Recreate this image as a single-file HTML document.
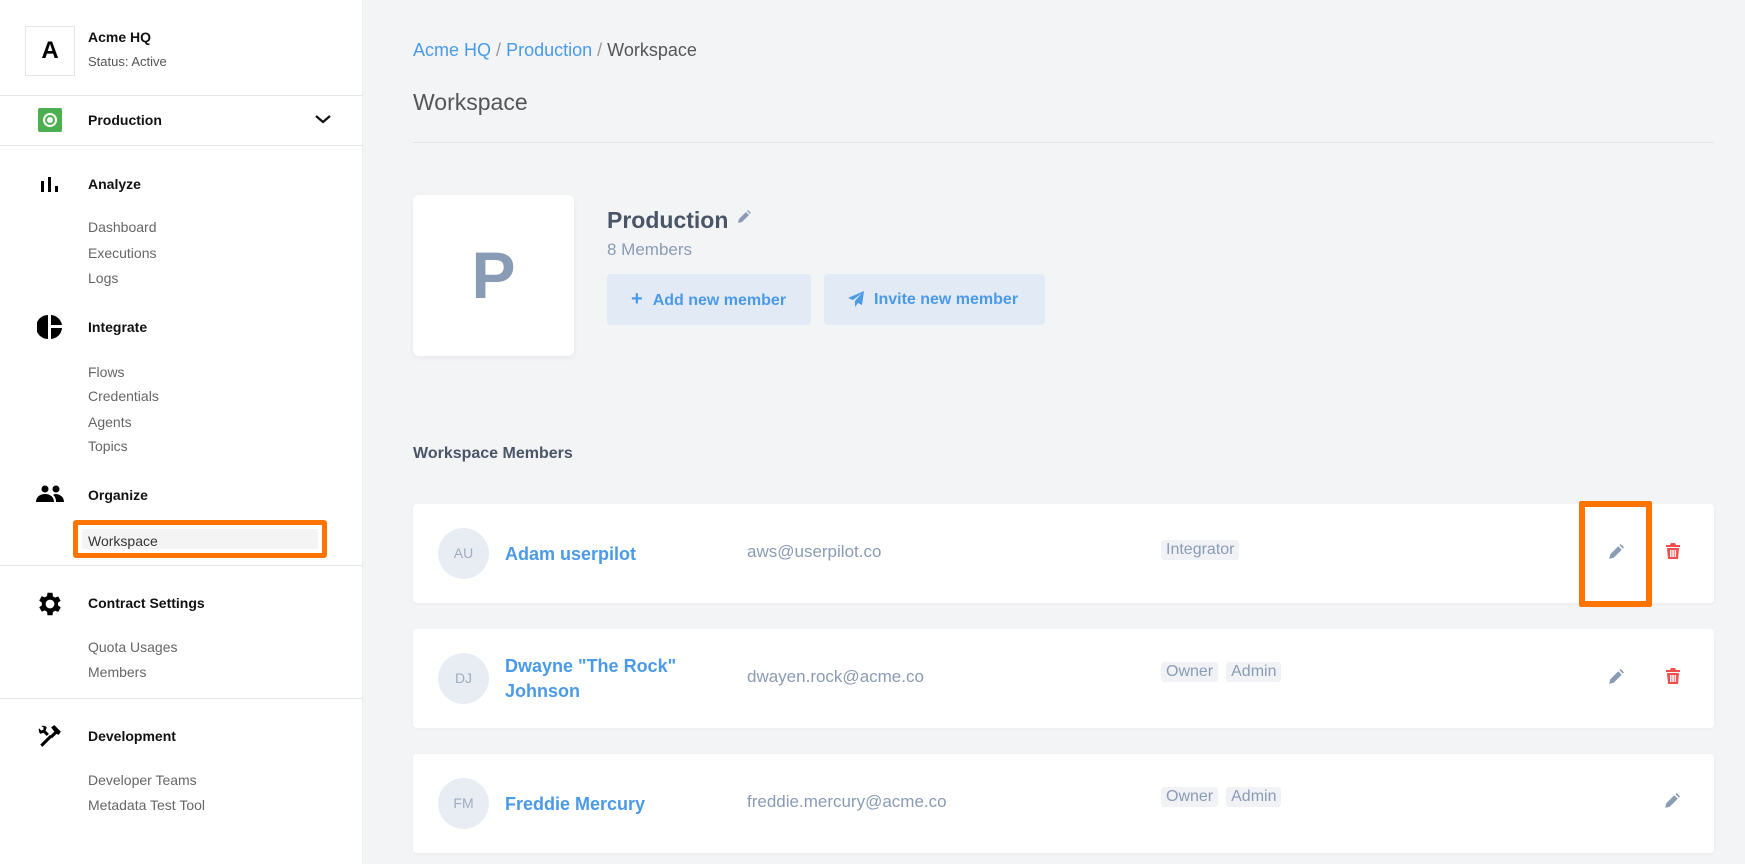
<!DOCTYPE html>
<html><head><meta charset="utf-8">
<style>
*{box-sizing:border-box;margin:0;padding:0}
body{width:1745px;height:864px;overflow:hidden;background:#f3f4f6;font-family:"Liberation Sans",sans-serif;position:relative}
.sb{position:absolute;left:0;top:0;width:363px;height:864px;background:#fff;border-right:1px solid #eceef1}
.a{position:absolute}
.hd{font-weight:bold;font-size:14px;color:#111}
.it{font-size:14px;color:#666}
.dv{position:absolute;left:0;width:363px;height:1px;background:#e8e8e8}
.main{color:#4a5568}
.row{position:absolute;left:413px;width:1301px;height:99px;background:#fff;border-radius:4px;box-shadow:0 1px 3px rgba(0,0,0,.04)}
.av{position:absolute;left:25px;top:24px;width:51px;height:51px;border-radius:50%;background:#e8edf4;color:#a0acbf;font-size:14px;text-align:center;line-height:51px}
.nm{position:absolute;left:92px;font-weight:bold;color:#4a9ae8;font-size:18px;line-height:25px}
.em{position:absolute;left:334px;top:38px;color:#8a9bb5;font-size:17px}
.tg{display:inline-block;background:#f0f2f5;color:#8a9bb5;font-size:16px;padding:1px 5px;margin-right:8px;border-radius:3px}
.tags{position:absolute;left:748px;top:33px}
</style></head><body>
<div class="sb">
 <div class="a" style="left:25px;top:26px;width:50px;height:50px;border:1px solid #e5e5e5;font-weight:bold;font-size:24px;text-align:center;line-height:48px">A</div>
 <div class="a hd" style="left:88px;top:29px">Acme HQ</div>
 <div class="a" style="left:88px;top:54px;font-size:13px;color:#555">Status: Active</div>
 <div class="dv" style="top:95px"></div>
 <div class="a" style="left:38px;top:108px;width:24px;height:24px;background:#4caf50;border-radius:2px"><div style="position:absolute;left:5px;top:5px;width:14px;height:14px;border:2px solid #fff;border-radius:50%"></div><div style="position:absolute;left:9px;top:9px;width:6px;height:6px;background:#fff;border-radius:50%"></div></div>
 <div class="a hd" style="left:88px;top:112px">Production</div>
 <svg class="a" style="left:314px;top:113px" width="18" height="12"><path d="M2 3l7 6 7-6" stroke="#111" stroke-width="2.2" fill="none"/></svg>
 <div class="dv" style="top:145px"></div>
 <svg class="a" style="left:40px;top:175px" width="20" height="18"><rect x="1" y="6" width="3" height="11"/><rect x="8" y="2" width="3" height="15"/><rect x="15" y="11" width="3" height="6"/></svg>
 <div class="a hd" style="left:88px;top:176px">Analyze</div>
 <div class="a it" style="left:88px;top:219px">Dashboard</div>
 <div class="a it" style="left:88px;top:245px">Executions</div>
 <div class="a it" style="left:88px;top:270px">Logs</div>
 <svg class="a" style="left:37px;top:314px" width="26" height="26"><path d="M11 1A12 12 0 0 0 11 25Z"/><path d="M14 1A12 12 0 0 1 25 11H14Z"/><path d="M14 14H25A12 12 0 0 1 14 25Z"/></svg>
 <div class="a hd" style="left:88px;top:319px">Integrate</div>
 <div class="a it" style="left:88px;top:364px">Flows</div>
 <div class="a it" style="left:88px;top:388px">Credentials</div>
 <div class="a it" style="left:88px;top:414px">Agents</div>
 <div class="a it" style="left:88px;top:438px">Topics</div>
 <svg class="a" style="left:36px;top:485px" width="28" height="18"><circle cx="9" cy="4" r="3.5"/><circle cx="20" cy="4" r="3.5"/><path d="M0 17c0-5 4-8 9-8s9 3 9 8z"/><path d="M19 9c5 0 9 3 9 8h-8c0-3-1-6-3-7z"/></svg>
 <div class="a hd" style="left:88px;top:487px">Organize</div>
 <div class="a" style="left:73px;top:520px;width:254px;height:38px;border:5px solid #ff7300;border-radius:3px;background:#f4f4f4;box-shadow:inset 0 0 0 4px #fff"></div>
 <div class="a it" style="left:88px;top:533px;color:#333">Workspace</div>
 <div class="dv" style="top:565px"></div>
 <svg class="a" style="left:35px;top:589px" width="30" height="30" viewBox="0 0 24 24"><path fill-rule="evenodd" d="M19.4 13a7.5 7.5 0 0 0 0-2l2.1-1.6-2-3.5-2.5 1a7 7 0 0 0-1.7-1L15 3h-4l-.4 2.7a7 7 0 0 0-1.7 1l-2.5-1-2 3.5L6.5 11a7.5 7.5 0 0 0 0 2l-2.1 1.6 2 3.5 2.5-1a7 7 0 0 0 1.7 1L11 21h4l.4-2.7a7 7 0 0 0 1.7-1l2.5 1 2-3.5zM13 15.5A3.5 3.5 0 1 1 13 8.5a3.5 3.5 0 0 1 0 7z" transform="translate(-1 0)"/></svg>
 <div class="a hd" style="left:88px;top:595px">Contract Settings</div>
 <div class="a it" style="left:88px;top:639px">Quota Usages</div>
 <div class="a it" style="left:88px;top:664px">Members</div>
 <div class="dv" style="top:698px"></div>
 <svg class="a" style="left:37px;top:723px" width="26" height="26" viewBox="0 0 24 24"><path d="M3 20l9-9 2 2-9 9zM13 4l3-2 6 6-2 3-2-1-4 4-2-2 4-4zM4 3c2-1 4 0 5 1l-1 3 3 3-2 2-3-3-3 1C2 9 1 6 2 5l2 2 2-1 0-2z"/></svg>
 <div class="a hd" style="left:88px;top:728px">Development</div>
 <div class="a it" style="left:88px;top:772px">Developer Teams</div>
 <div class="a it" style="left:88px;top:797px">Metadata Test Tool</div>
</div>

<div class="main">
 <div class="a" style="left:413px;top:40px;font-size:18px"><span style="color:#4a9ae8">Acme HQ</span> <span style="color:#999">/</span> <span style="color:#4a9ae8">Production</span> <span style="color:#999">/</span> <span style="color:#555">Workspace</span></div>
 <div class="a" style="left:413px;top:89px;font-size:23px;color:#555">Workspace</div>
 <div class="a" style="left:413px;top:142px;width:1301px;height:1px;background:#e2e4e8"></div>
 <div class="a" style="left:413px;top:195px;width:161px;height:161px;background:#fff;border-radius:6px;box-shadow:0 2px 6px rgba(0,0,0,.05);text-align:center;line-height:161px;font-size:66px;font-weight:bold;color:#8a9bb5">P</div>
 <div class="a" style="left:607px;top:207px;font-size:23px;font-weight:bold;color:#4a5568">Production</div>
 <svg class="a" style="left:737px;top:210px" width="14" height="14" viewBox="0 0 14 14"><path d="M1 13l1-4 7-7 3 3-7 7zM10 1l1-1 3 3-1 1z" fill="#8a9bb5"/></svg>
 <div class="a" style="left:607px;top:240px;font-size:17px;color:#8a9bb5">8 Members</div>
 <div class="a" style="left:607px;top:274px;width:204px;height:51px;background:#e2eaf5;border-radius:4px;color:#4a9ae8;font-size:16px;font-weight:bold;line-height:51px;padding-left:24px"><span style="font-size:20px;margin-right:10px">+</span>Add new member</div>
 <div class="a" style="left:824px;top:274px;width:221px;height:51px;background:#e2eaf5;border-radius:4px;color:#4a9ae8;font-size:16px;font-weight:bold;line-height:51px;padding-left:24px">
  <svg style="vertical-align:-3px;margin-right:10px" width="16" height="16" viewBox="0 0 16 16"><path d="M16 0L0 7l5 2 9-7-7 8v6l3-4 4 2z" fill="#4a9ae8"/></svg>Invite new member</div>
 <div class="a" style="left:413px;top:445px;font-size:16px;font-weight:bold;color:#4a5568">Workspace Members</div>

 <div class="row" style="top:504px"><div class="av">AU</div><div class="nm" style="top:38px">Adam userpilot</div><div class="em">aws@userpilot.co</div><div class="tags" style="top:36px"><span class="tg">Integrator</span></div></div>
 <div class="row" style="top:629px"><div class="av">DJ</div><div class="nm" style="top:25px">Dwayne "The Rock"<br>Johnson</div><div class="em">dwayen.rock@acme.co</div><div class="tags"><span class="tg">Owner</span><span class="tg">Admin</span></div></div>
 <div class="row" style="top:754px"><div class="av">FM</div><div class="nm" style="top:38px">Freddie Mercury</div><div class="em">freddie.mercury@acme.co</div><div class="tags"><span class="tg">Owner</span><span class="tg">Admin</span></div></div>

 <svg class="a" style="left:1608px;top:544px" width="16" height="16" viewBox="0 0 14 14"><path d="M1 13l1-4 7-7 3 3-7 7zM10 1l1-1 3 3-1 1z" fill="#8a9bb5"/></svg>
 <svg class="a" style="left:1666px;top:543px" width="14" height="16" viewBox="0 0 14 16"><path d="M0 2h4l1-2h4l1 2h4v2H0zM1 5h12l-1 11H2zM4 7v7h1.5V7zM6.3 7v7h1.5V7zM8.6 7v7h1.5V7z" fill="#f04d4d" fill-rule="evenodd"/></svg>
 <div class="a" style="left:1579px;top:501px;width:73px;height:106px;border:6px solid #ff7300;border-radius:2px"></div>
 <svg class="a" style="left:1608px;top:669px" width="16" height="16" viewBox="0 0 14 14"><path d="M1 13l1-4 7-7 3 3-7 7zM10 1l1-1 3 3-1 1z" fill="#8a9bb5"/></svg>
 <svg class="a" style="left:1666px;top:668px" width="14" height="16" viewBox="0 0 14 16"><path d="M0 2h4l1-2h4l1 2h4v2H0zM1 5h12l-1 11H2zM4 7v7h1.5V7zM6.3 7v7h1.5V7zM8.6 7v7h1.5V7z" fill="#f04d4d" fill-rule="evenodd"/></svg>
 <svg class="a" style="left:1664px;top:793px" width="16" height="16" viewBox="0 0 14 14"><path d="M1 13l1-4 7-7 3 3-7 7zM10 1l1-1 3 3-1 1z" fill="#8a9bb5"/></svg>
</div>
</body></html>
